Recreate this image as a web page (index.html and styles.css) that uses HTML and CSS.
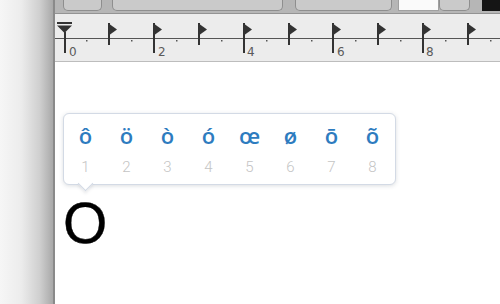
FILE: index.html
```html
<!DOCTYPE html>
<html lang="en">
<head>
    <meta charset="UTF-8">
    <meta name="viewport" content="width=device-width, initial-scale=1.0">
    <title>Accent menu</title>
    <link rel="stylesheet" href="styles.css">
</head>
<body>
    <div class="window">
        <div class="sidebar"></div>
        <div class="divider"></div>

        <div class="doc">
            <!-- Toolbar (only the bottom edge is visible) -->
            <div class="toolbar">
                <div class="tb-btn b1"></div>
                <div class="tb-btn b2"></div>
                <div class="tb-btn b3"></div>
                <div class="tb-btn b4 field"></div>
                <div class="tb-btn b5"></div>
                <div class="tb-btn b6 dark"></div>
            </div>

            <!-- Ruler -->
            <div class="ruler">
                <svg width="445" height="47" viewBox="0 0 445 47">
                    <line x1="0" y1="24.5" x2="445" y2="24.5" stroke="#555" stroke-width="1"/>
                    <!-- indent marker -->
                    <rect x="2" y="8" width="15" height="2" fill="#333"/>
                    <polygon points="2,11.5 17,11.5 9.5,19" fill="#333"/>
                    <rect x="9" y="18" width="2" height="21" fill="#333"/>
                    <g id="marks" fill="#333"></g>
                    <g id="dots" fill="#555"></g>
                    <g class="ruler-num">
                        <text x="14" y="42">0</text>
                        <text x="103" y="42">2</text>
                        <text x="192" y="42">4</text>
                        <text x="282" y="42">6</text>
                        <text x="371" y="42">8</text>
                    </g>
                </svg>
            </div>

            <!-- Page -->
            <div class="page">
                <p class="text">O</p>

                <div class="popover">
                    <div class="choices">
                        <div class="choice"><span class="ch">ô</span><span class="num">1</span></div>
                        <div class="choice"><span class="ch">ö</span><span class="num">2</span></div>
                        <div class="choice"><span class="ch">ò</span><span class="num">3</span></div>
                        <div class="choice"><span class="ch">ó</span><span class="num">4</span></div>
                        <div class="choice"><span class="ch">œ</span><span class="num">5</span></div>
                        <div class="choice"><span class="ch">ø</span><span class="num">6</span></div>
                        <div class="choice"><span class="ch">ō</span><span class="num">7</span></div>
                        <div class="choice"><span class="ch">õ</span><span class="num">8</span></div>
                    </div>
                </div>
            </div>
        </div>
    </div>

    <script>
        // Tab stop flags and minor dots on the ruler
        const ns = "http://www.w3.org/2000/svg";
        const marks = document.getElementById("marks");
        const dots = document.getElementById("dots");

        for (let k = 1; k <= 9; k++) {
            const x = Math.round(8 + 44.9 * k);
            const major = k % 2 === 0;

            const stem = document.createElementNS(ns, "rect");
            stem.setAttribute("x", x);
            stem.setAttribute("y", 9);
            stem.setAttribute("width", 2);
            stem.setAttribute("height", major ? 30 : 22);
            marks.appendChild(stem);

            const flag = document.createElementNS(ns, "polygon");
            flag.setAttribute("points", `${x},9 ${x + 9},15.5 ${x},22`);
            marks.appendChild(flag);
        }

        for (let k = 0; k < 10; k++) {
            const dot = document.createElementNS(ns, "rect");
            dot.setAttribute("x", Math.round(31 + 44.9 * k));
            dot.setAttribute("y", 26);
            dot.setAttribute("width", 1.5);
            dot.setAttribute("height", 1.5);
            dots.appendChild(dot);
        }
    </script>
</body>
</html>
```

FILE: styles.css
```css
body {
    margin: 0;
    padding: 0;
    width: 500px;
    height: 304px;
    overflow: hidden;
    font-family: "Liberation Sans", Arial, sans-serif;
    background-color: #fff;
}

.window {
    display: flex;
    height: 304px;
}

.sidebar {
    width: 53px;
    background: linear-gradient(to right, #f6f6f6 0%, #ececec 40%, #cfcfcf 75%, #a9a9a9 100%);
}

.divider {
    width: 2px;
    background-color: #8a8a8a;
}

.doc {
    flex: 1;
    display: flex;
    flex-direction: column;
    min-width: 0;
}

/* Toolbar */
.toolbar {
    display: flex;
    height: 13px;
    background-color: #b6b6b6;
    border-bottom: 1px solid #939393;
    overflow: hidden;
}

.tb-btn {
    height: 10px;
    background-color: #cacaca;
    border: 1px solid #8e8e8e;
    border-top: none;
    border-radius: 0 0 5px 5px;
    flex-shrink: 0;
}

.b1 { margin-left: 8px; width: 37px; }
.b2 { margin-left: 10px; width: 169px; }
.b3 { margin-left: 12px; width: 95px; }
.b4 { margin-left: 6px; width: 39px; }
.b5 { width: 29px; }
.b6 { margin-left: 12px; width: 30px; }

.field {
    background-color: #fafafa;
    border-color: #a0a0a0;
    border-radius: 0;
}

.dark {
    background-color: #151515;
    border-color: #151515;
    border-radius: 0;
}

/* Ruler */
.ruler {
    height: 47px;
    background-color: #ececec;
    border-bottom: 1px solid #bdbdbd;
}

.ruler svg {
    display: block;
}

.ruler-num text {
    font-family: "DejaVu Sans", sans-serif;
    font-size: 12px;
    fill: #5a5a5a;
}

/* Page */
.page {
    flex: 1;
    position: relative;
    padding: 129px 0 0 8px;
}

.text {
    margin: 0;
    font-size: 57px;
    line-height: 64px;
    color: #000;
    -webkit-text-stroke: 0.4px #000;
}

/* Accent popover */
.popover {
    position: absolute;
    left: 8px;
    top: 51px;
    width: 328px;
    padding: 8px 2px 8px 1px;
    background-color: #fff;
    border: 1px solid #d3dae5;
    border-radius: 6px;
    box-shadow: 0 1px 4px rgba(60, 70, 90, 0.18);
}

.popover::after {
    content: "";
    position: absolute;
    left: 16px;
    bottom: -5px;
    width: 10px;
    height: 10px;
    background-color: #fff;
    border-right: 1px solid #d3dae5;
    border-bottom: 1px solid #d3dae5;
    transform: rotate(45deg);
    box-shadow: 2px 2px 3px rgba(60, 70, 90, 0.1);
}

.choices {
    display: flex;
}

.choice {
    width: 41px;
    display: flex;
    flex-direction: column;
    align-items: center;
    gap: 10px;
}

.ch {
    font-family: "Open Sans", Roboto, sans-serif;
    font-weight: 600;
    font-size: 22px;
    line-height: 26px;
    color: #2e7cbf;
}

.num {
    font-family: Roboto, "Noto Sans", sans-serif;
    font-weight: 300;
    font-size: 15px;
    line-height: 18px;
    color: #c4c4c4;
}
```
